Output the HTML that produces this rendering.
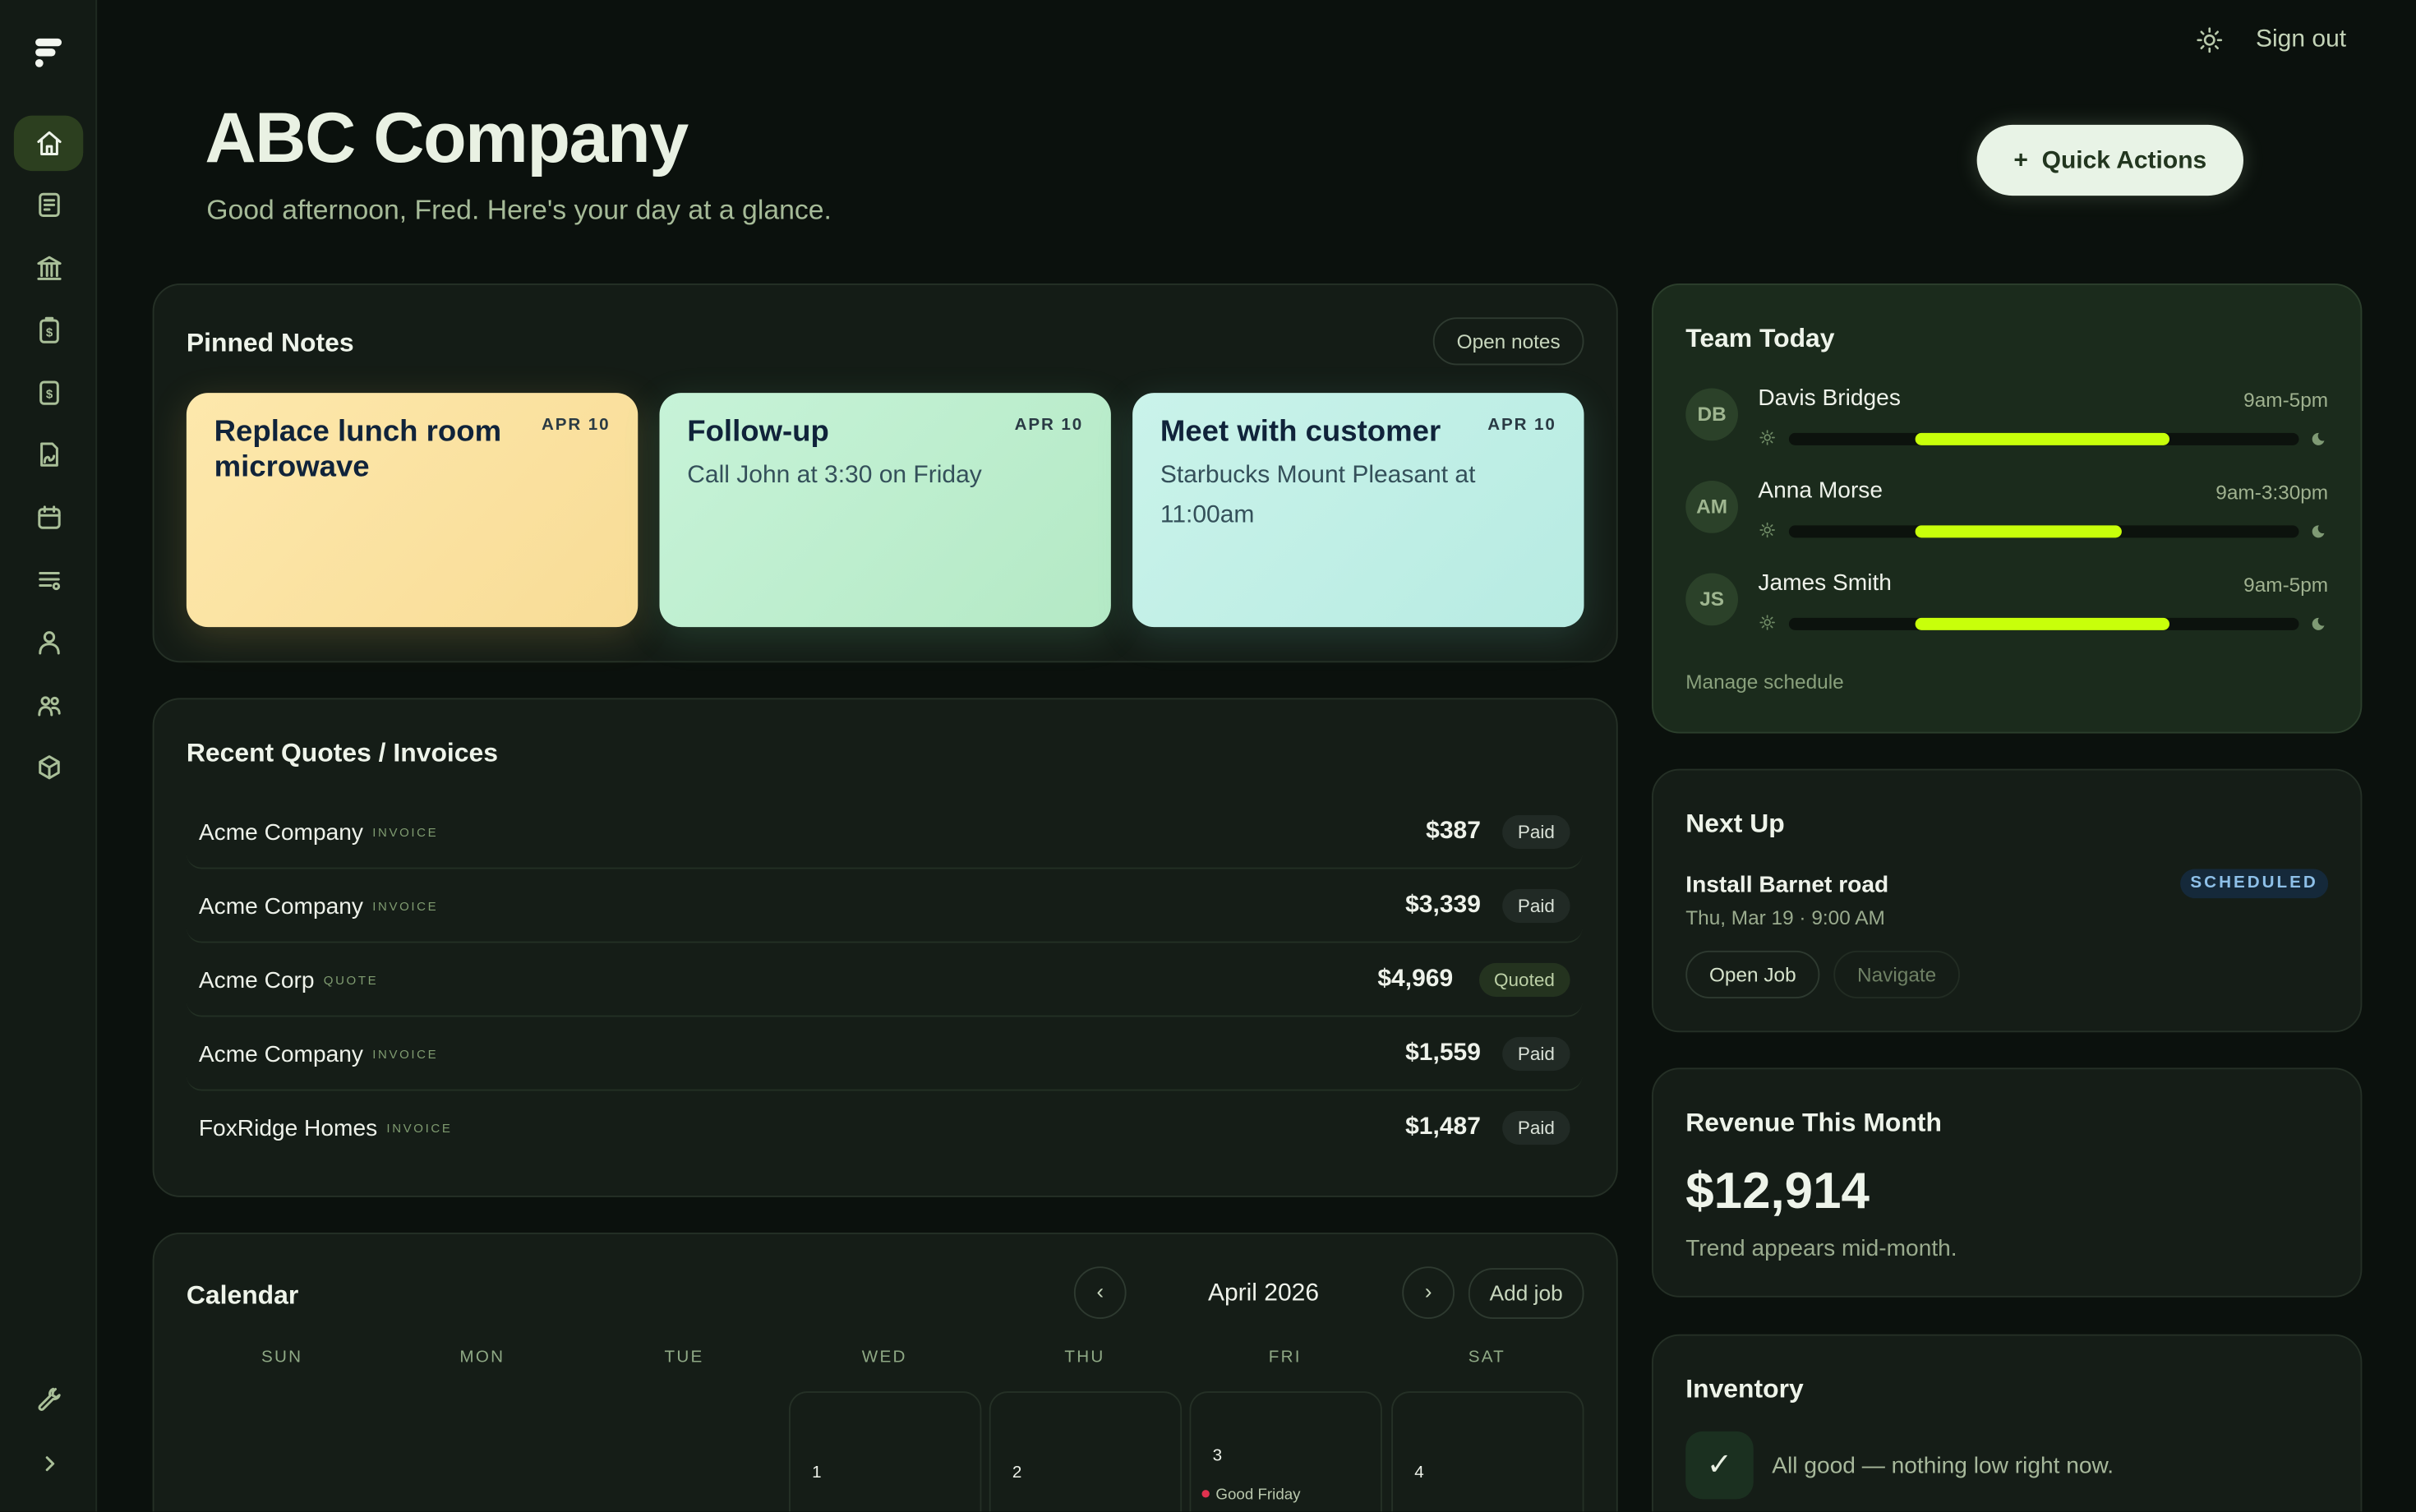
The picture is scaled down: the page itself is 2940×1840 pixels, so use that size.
<!DOCTYPE html>
<html><head><meta charset="utf-8">
<style>
*{box-sizing:border-box;margin:0;padding:0}
html,body{width:2940px;height:1840px;overflow:hidden;background:#0b110d}
#root{position:absolute;left:0;top:0;width:1568px;height:981.4px;transform:scale(1.875);transform-origin:0 0;background:#0b110d;font-family:"Liberation Sans",sans-serif;color:#e8f0e2;overflow:hidden}
.abs{position:absolute}
.side{left:0;top:0;width:63px;height:982px;background:#131b15;border-right:1px solid #1f2a21}
.ic{position:absolute;left:22px;width:20px;height:20px}
.ic svg{width:20px;height:20px;fill:none;stroke:#a9bf98;stroke-width:1.6;stroke-linecap:round;stroke-linejoin:round}
.card{position:absolute;background:#151d17;border:1px solid #253026;border-radius:18px}
.h{font-size:17px;font-weight:bold;color:#eef4ea}
.note{position:absolute;top:255px;width:293px;height:152px;border-radius:14px;padding:14px 18px;color:#0f2338}
.note .t{font-size:19.5px;font-weight:bold;line-height:23px;color:#10233a}
.note .d{position:absolute;right:18px;top:15px;font-size:11px;font-weight:bold;letter-spacing:1px;color:#2a3a44}
.note .b{font-size:16px;color:#34505a;line-height:26px;margin-top:4px}
.row{position:absolute;left:121px;width:906px;height:46px;border-bottom:1px solid #233024;border-radius:0 0 10px 10px}
.row .n{position:absolute;left:8px;top:14px;font-size:15px;color:#eef2ea}
.row .n span{font-size:8px;letter-spacing:1.4px;color:#7f9b70;margin-left:6px;vertical-align:2px}
.row .a{position:absolute;right:66px;top:13px;font-size:16px;font-weight:bold;color:#eef2ea}
.pill{position:absolute;right:8px;top:11px;height:22px;border-radius:11px;background:#212a25;color:#d8e0d6;font-size:12px;padding:4px 10px}
.dow{position:absolute;top:875px;font-size:11px;letter-spacing:1.2px;color:#8fa985;width:126px;text-align:center}
.cell{position:absolute;top:903px;width:125px;height:100px;border:1px solid #253026;border-radius:12px;font-size:11px;color:#eef2ea}
.mem{position:absolute;left:1094px;width:417px;height:50px}
.av{position:absolute;left:0;top:0;width:34px;height:34px;border-radius:50%;background:#2b4129;color:#9fb690;font-size:13px;font-weight:bold;text-align:center;line-height:34px}
.mn{position:absolute;left:47px;top:-2px;font-size:15px;color:#eef2ea}
.mt{position:absolute;right:0;top:0;font-size:13px;color:#9fb18f}
.bar{position:absolute;left:67px;top:29px;width:331px;height:8px;border-radius:4px;background:#0c120d}
.bar i{position:absolute;top:0;height:8px;border-radius:4px;background:#c8ff0a;left:82px}
.sun{position:absolute;left:48px;top:27px;width:10px;height:10px}
.moon{position:absolute;right:2px;top:28px;width:10px;height:10px}
.btn{position:absolute;border:1px solid #2e3a30;border-radius:16px;font-size:13px;color:#c7d6bd;text-align:center}
</style></head><body><div id="root">

<div class="abs side">
  <svg class="abs" style="left:20px;top:23px" width="22" height="22" viewBox="0 0 22 22"><rect x="3" y="2" width="17" height="5" rx="2.5" fill="#f2f6ef"/><rect x="3" y="8.5" width="13" height="5" rx="2.5" fill="#f2f6ef"/><circle cx="5.5" cy="18" r="2.6" fill="#f2f6ef"/></svg>
  <div class="abs" style="left:9px;top:75px;width:45px;height:36px;border-radius:12px;background:#2c3f1f"></div>
  <div class="ic" style="top:83px"><svg viewBox="0 0 20 20" style="stroke:#eef4ea"><path d="M3 9 L10 3 L17 9 M5 8 V17 H15 V8 M8.5 17 V12 H11.5 V17"/></svg></div>
  <div class="ic" style="top:123px"><svg viewBox="0 0 20 20"><rect x="4" y="3" width="12" height="14" rx="2"/><path d="M7 7H13M7 10H13M7 13H10"/></svg></div>
  <div class="ic" style="top:164px"><svg viewBox="0 0 20 20"><path d="M3 7 L10 3 L17 7 Z M5 8V15M8.5 8V15M11.5 8V15M15 8V15M3 17H17"/></svg></div>
  <div class="ic" style="top:204px"><svg viewBox="0 0 20 20"><rect x="4.5" y="4" width="11" height="14" rx="2"/><path d="M8 4V2.5H12V4"/><text x="10" y="14.5" font-size="8" text-anchor="middle" fill="#a9bf98" stroke="none" font-weight="bold" font-family="Liberation Sans">$</text></svg></div>
  <div class="ic" style="top:245px"><svg viewBox="0 0 20 20"><rect x="4.5" y="3" width="11" height="14" rx="2"/><text x="10" y="13.5" font-size="8" text-anchor="middle" fill="#a9bf98" stroke="none" font-weight="bold" font-family="Liberation Sans">$</text></svg></div>
  <div class="ic" style="top:285px"><svg viewBox="0 0 20 20"><path d="M5 3H12L15 6V17H5Z"/><path d="M7 15C7 11 10 11 10 13C10 15 13 13 13 11"/></svg></div>
  <div class="ic" style="top:326px"><svg viewBox="0 0 20 20"><rect x="3.5" y="4.5" width="13" height="12" rx="2"/><path d="M3.5 8.5H16.5M7 3V6M13 3V6"/></svg></div>
  <div class="ic" style="top:366px"><svg viewBox="0 0 20 20"><path d="M4 6H16M4 10H16M4 14H11"/><circle cx="14.5" cy="14.5" r="1.7"/></svg></div>
  <div class="ic" style="top:407px"><svg viewBox="0 0 20 20"><circle cx="10" cy="6.5" r="3"/><path d="M4 17C4 12.5 7 11 10 11S16 12.5 16 17"/></svg></div>
  <div class="ic" style="top:448px"><svg viewBox="0 0 20 20"><circle cx="7.5" cy="7" r="2.3"/><circle cx="13.5" cy="7" r="2"/><path d="M3.5 16C3.5 12 5.5 11 7.5 11S11.5 12 11.5 16M12 11.5C14.5 11 16.5 12.5 16.5 15"/></svg></div>
  <div class="ic" style="top:488px"><svg viewBox="0 0 20 20"><path d="M10 3L16 6.5V13.5L10 17L4 13.5V6.5Z M4 6.5L10 10L16 6.5M10 10V17"/></svg></div>
  <div class="ic" style="top:898px"><svg viewBox="0 0 20 20"><path d="M12.5 3.5A3.5 3.5 0 0 0 10.5 8L4 14.5A1.4 1.4 0 0 0 6 16.5L12.5 10A3.5 3.5 0 0 0 16.5 7.5L14.5 9L12 7.5L12.5 5L14 3.6"/></svg></div>
  <div class="ic" style="top:940px"><svg viewBox="0 0 20 20"><path d="M8.5 6L12.5 10L8.5 14"/></svg></div>
</div>

<svg class="abs" style="left:1425px;top:17px" width="18" height="18" viewBox="0 0 18 18" fill="none" stroke="#b8c9ab" stroke-width="1.4" stroke-linecap="round"><circle cx="9" cy="9" r="3"/><path d="M9 1.5V3.5M9 14.5V16.5M1.5 9H3.5M14.5 9H16.5M3.7 3.7L5 5M13 13L14.3 14.3M3.7 14.3L5 13M13 5L14.3 3.7"/></svg>
<div class="abs" style="left:1464px;top:17px;font-size:16px;color:#c4d4b8">Sign out</div>

<div class="abs" style="left:133px;top:62px;font-size:46px;font-weight:bold;color:#e9f1e3;letter-spacing:-0.8px">ABC Company</div>
<div class="abs" style="left:134px;top:126px;font-size:18px;color:#a6bb98">Good afternoon, Fred. Here's your day at a glance.</div>

<div class="abs" style="left:1283px;top:81px;width:173px;height:46px;border-radius:23px;background:#e8f3e6;box-shadow:0 0 14px rgba(200,230,190,0.2);color:#22361f;font-size:16px;font-weight:bold;line-height:47px;text-align:center">+&nbsp; Quick Actions</div>

<!-- Pinned notes -->
<div class="card" style="left:99px;top:184px;width:951px;height:246px;background:#141c16"></div>
<div class="abs h" style="left:121px;top:213px">Pinned Notes</div>
<div class="btn" style="left:930px;top:206px;width:98px;height:31px;line-height:29px">Open notes</div>
<div class="note" style="left:121px;background:linear-gradient(135deg,#fde8ac,#f8dc96);box-shadow:0 6px 24px rgba(240,200,100,0.18)"><div class="t" style="width:200px">Replace lunch room microwave</div><div class="d">APR 10</div></div>
<div class="note" style="left:428px;background:linear-gradient(135deg,#c7f3d8,#b4e9c5);box-shadow:0 6px 24px rgba(120,220,160,0.16)"><div class="t">Follow-up</div><div class="d">APR 10</div><div class="b">Call John at 3:30 on Friday</div></div>
<div class="note" style="left:735px;background:linear-gradient(135deg,#caf3ea,#b7ebe2);box-shadow:0 6px 24px rgba(120,220,200,0.16)"><div class="t">Meet with customer</div><div class="d">APR 10</div><div class="b">Starbucks Mount Pleasant at 11:00am</div></div>

<!-- Recent -->
<div class="card" style="left:99px;top:453px;width:951px;height:324px"></div>
<div class="abs h" style="left:121px;top:479px">Recent Quotes / Invoices</div>
<div class="row" style="top:518px"><div class="n">Acme Company<span>INVOICE</span></div><div class="a">$387</div><div class="pill">Paid</div></div>
<div class="row" style="top:566px"><div class="n">Acme Company<span>INVOICE</span></div><div class="a">$3,339</div><div class="pill">Paid</div></div>
<div class="row" style="top:614px"><div class="n">Acme Corp<span>QUOTE</span></div><div class="a" style="right:84px">$4,969</div><div class="pill" style="background:#24331f;color:#bcd0a6">Quoted</div></div>
<div class="row" style="top:662px"><div class="n">Acme Company<span>INVOICE</span></div><div class="a">$1,559</div><div class="pill">Paid</div></div>
<div class="row" style="top:710px;border-bottom:none"><div class="n">FoxRidge Homes<span>INVOICE</span></div><div class="a">$1,487</div><div class="pill">Paid</div></div>

<!-- Calendar -->
<div class="card" style="left:99px;top:800px;width:951px;height:200px"></div>
<div class="abs h" style="left:121px;top:831px">Calendar</div>
<div class="btn" style="left:697px;top:822px;width:34px;height:34px;border-radius:17px;line-height:31px;font-size:14px">‹</div>
<div class="abs" style="left:760px;top:831px;width:120px;text-align:center;font-size:16px;color:#eef2ea">April 2026</div>
<div class="btn" style="left:910px;top:822px;width:34px;height:34px;border-radius:17px;line-height:31px;font-size:14px">›</div>
<div class="btn" style="left:953px;top:823px;width:75px;height:33px;line-height:31px;font-size:14px">Add job</div>
<div class="dow" style="left:120px">SUN</div><div class="dow" style="left:250px">MON</div><div class="dow" style="left:381px">TUE</div><div class="dow" style="left:511px">WED</div><div class="dow" style="left:641px">THU</div><div class="dow" style="left:771px">FRI</div><div class="dow" style="left:902px">SAT</div>
<div class="cell" style="left:512px"><span class="abs" style="left:14px;top:46px">1</span></div>
<div class="cell" style="left:642px"><span class="abs" style="left:14px;top:46px">2</span></div>
<div class="cell" style="left:772px"><span class="abs" style="left:14px;top:35px">3</span><span class="abs" style="left:7px;top:61px;font-size:10px;color:#b9c8ad"><i style="display:inline-block;width:5px;height:5px;border-radius:50%;background:#e0324f;margin-right:4px;vertical-align:1px"></i>Good Friday</span></div>
<div class="cell" style="left:903px"><span class="abs" style="left:14px;top:46px">4</span></div>

<!-- Team Today -->
<div class="card" style="left:1072px;top:184px;width:461px;height:292px;background:#1b2b1c;border-color:#2c3f2c"></div>
<div class="abs h" style="left:1094px;top:210px">Team Today</div>
<div class="mem" style="top:252px"><div class="av">DB</div><div class="mn">Davis Bridges</div><div class="mt">9am-5pm</div><svg class="sun" viewBox="0 0 10 10" fill="none" stroke="#6f8a65" stroke-width="0.9" stroke-linecap="round"><circle cx="5" cy="5" r="1.8"/><path d="M5 0.5V1.8M5 8.2V9.5M0.5 5H1.8M8.2 5H9.5M1.8 1.8L2.7 2.7M7.3 7.3L8.2 8.2M1.8 8.2L2.7 7.3M7.3 2.7L8.2 1.8"/></svg><div class="bar"><i style="width:165px"></i></div><svg class="moon" viewBox="0 0 10 10"><path d="M6 1A4 4 0 1 0 9.5 6A3.2 3.2 0 0 1 6 1Z" fill="#7f9a74"/></svg></div>
<div class="mem" style="top:312px"><div class="av">AM</div><div class="mn">Anna Morse</div><div class="mt">9am-3:30pm</div><svg class="sun" viewBox="0 0 10 10" fill="none" stroke="#6f8a65" stroke-width="0.9" stroke-linecap="round"><circle cx="5" cy="5" r="1.8"/><path d="M5 0.5V1.8M5 8.2V9.5M0.5 5H1.8M8.2 5H9.5M1.8 1.8L2.7 2.7M7.3 7.3L8.2 8.2M1.8 8.2L2.7 7.3M7.3 2.7L8.2 1.8"/></svg><div class="bar"><i style="width:134px"></i></div><svg class="moon" viewBox="0 0 10 10"><path d="M6 1A4 4 0 1 0 9.5 6A3.2 3.2 0 0 1 6 1Z" fill="#7f9a74"/></svg></div>
<div class="mem" style="top:372px"><div class="av">JS</div><div class="mn">James Smith</div><div class="mt">9am-5pm</div><svg class="sun" viewBox="0 0 10 10" fill="none" stroke="#6f8a65" stroke-width="0.9" stroke-linecap="round"><circle cx="5" cy="5" r="1.8"/><path d="M5 0.5V1.8M5 8.2V9.5M0.5 5H1.8M8.2 5H9.5M1.8 1.8L2.7 2.7M7.3 7.3L8.2 8.2M1.8 8.2L2.7 7.3M7.3 2.7L8.2 1.8"/></svg><div class="bar"><i style="width:165px"></i></div><svg class="moon" viewBox="0 0 10 10"><path d="M6 1A4 4 0 1 0 9.5 6A3.2 3.2 0 0 1 6 1Z" fill="#7f9a74"/></svg></div>
<div class="abs" style="left:1094px;top:435px;font-size:13px;color:#89a07c">Manage schedule</div>

<!-- Next Up -->
<div class="card" style="left:1072px;top:499px;width:461px;height:171px"></div>
<div class="abs h" style="left:1094px;top:525px">Next Up</div>
<div class="abs" style="left:1094px;top:566px;font-size:15px;font-weight:bold;color:#eef2ea">Install Barnet road</div>
<div class="abs" style="left:1094px;top:588px;font-size:13px;color:#9aab8e">Thu, Mar 19 · 9:00 AM</div>
<div class="abs" style="left:1415px;top:564px;width:96px;height:19px;border-radius:10px;background:#15293a;color:#8ec0e8;font-size:11px;font-weight:bold;letter-spacing:1.6px;text-align:center;line-height:19px">SCHEDULED</div>
<div class="btn" style="left:1094px;top:617px;width:87px;height:31px;line-height:29px;color:#d5e2cb">Open Job</div>
<div class="btn" style="left:1190px;top:617px;width:82px;height:31px;line-height:29px;color:#6e8064;border-color:#222c23">Navigate</div>

<!-- Revenue -->
<div class="card" style="left:1072px;top:693px;width:461px;height:149px"></div>
<div class="abs h" style="left:1094px;top:719px">Revenue This Month</div>
<div class="abs" style="left:1094px;top:754px;font-size:33px;font-weight:bold;color:#eef4ea">$12,914</div>
<div class="abs" style="left:1094px;top:802px;font-size:15px;color:#9aab8e">Trend appears mid-month.</div>

<!-- Inventory -->
<div class="card" style="left:1072px;top:866px;width:461px;height:140px"></div>
<div class="abs h" style="left:1094px;top:892px">Inventory</div>
<div class="abs" style="left:1094px;top:929px;width:44px;height:44px;border-radius:11px;background:#1b3020;color:#e8f0e2;font-size:20px;text-align:center;line-height:44px">✓</div>
<div class="abs" style="left:1150px;top:943px;font-size:15px;color:#a7b89b">All good — nothing low right now.</div>

</div></body></html>
